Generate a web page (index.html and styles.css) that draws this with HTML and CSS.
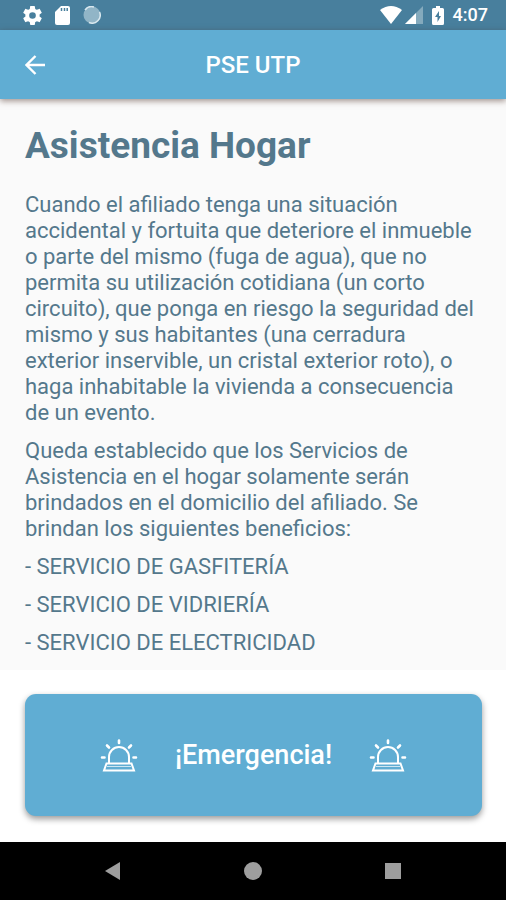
FILE: index.html
```html
<!DOCTYPE html>
<html lang="es">
<head>
<meta charset="utf-8">
<meta name="viewport" content="width=device-width, initial-scale=1">
<title>PSE UTP</title>
<link rel="stylesheet" href="styles.css">
</head>
<body>
<svg class="defs" aria-hidden="true">
  <symbol id="siren" viewBox="0 0 38 34">
    <g fill="none" stroke="#fff" stroke-width="2">
      <path d="M9 25V19a10 10 0 0 1 20 0v6"/>
      <path d="M6.500 25.500h25l2.500 7H4z"/>
      <path d="M7 28.500h24" stroke-width="1" opacity=".7"/>
      <path stroke-width="2.600" stroke-linecap="round" d="M19 2.500v2.500M7 7.500l2 2M31 7.500l-2 2M2 19.500h2.500M33.500 19.500h2.500"/>
    </g>
  </symbol>
</svg>
<div class="screen">
  <div class="status">
    <div class="status-group status-left">
      <svg class="icon-gear" viewBox="2 2 20 20"><path fill="#fff" d="M19.430 12.980c.04-.32.070-.64.070-.98s-.03-.66-.07-.98l2.110-1.650c.19-.15.240-.42.120-.64l-2-3.460c-.12-.22-.39-.3-.61-.22l-2.490 1c-.52-.4-1.080-.73-1.690-.98l-.38-2.650A.49.490 0 0 0 14 2h-4c-.25 0-.46.180-.49.420l-.38 2.650c-.61.250-1.170.590-1.690.980l-2.490-1c-.23-.09-.49 0-.61.220l-2 3.460c-.13.220-.07.490.120.640l2.110 1.650c-.04.320-.07.650-.07.980s.03.660.070.980l-2.110 1.650c-.19.150-.24.420-.12.640l2 3.460c.12.220.390.300.610.220l2.490-1c.52.400 1.080.730 1.690.980l.38 2.650c.03.240.240.420.490.420h4c.25 0 .46-.18.490-.42l.38-2.650c.61-.25 1.170-.59 1.690-.98l2.490 1c.23.090.490 0 .61-.22l2-3.460c.12-.22.070-.49-.12-.64l-2.110-1.650zM12 15.500a3.500 3.500 0 1 1 0-7 3.500 3.500 0 0 1 0 7z"/></svg>
      <svg class="icon-card" viewBox="0 0 15 19"><path fill="#fff" d="M6 0h7a2 2 0 0 1 2 2v15a2 2 0 0 1-2 2H2a2 2 0 0 1-2-2V6z"/><path stroke="#487f9d" stroke-width="1.500" d="M6.500 2v3M9.500 2v3M12.200 2v3"/></svg>
      <svg class="icon-sync" viewBox="0 0 18 18"><circle cx="9" cy="9" r="8.500" fill="#91b5c7"/><path fill="none" stroke="#d9e8ef" stroke-width="1.500" d="M2 4a8 8 0 0 1 9-3M16.500 6A8 8 0 0 1 6 16.500"/></svg>
    </div>
    <div class="status-group status-right">
      <svg class="icon-wifi" viewBox="0 0 22 18"><path fill="#fff" d="M0 4Q11-4 22 4L11 18z"/></svg>
      <svg class="icon-signal" viewBox="0 0 18 18"><path fill="#84aabd" d="M18 0v18H0z"/><path fill="#fff" d="M11 7v11H0z"/></svg>
      <svg class="icon-battery" viewBox="0 0 12 19"><path fill="#fff" d="M4 0h4v2h2.500A1.500 1.500 0 0 1 12 3.500v14a1.500 1.500 0 0 1-1.500 1.500h-9A1.500 1.500 0 0 1 0 17.500v-14A1.500 1.500 0 0 1 1.500 2H4z"/><path fill="#487f9d" d="M7 5L3 11h2.500v5L9 10H7z"/></svg>
      <span class="clock">4:07</span>
    </div>
  </div>
  <header class="appbar">
    <button class="back" aria-label="Volver"><svg viewBox="0 0 20 20"><path fill="none" stroke="#fff" stroke-width="2.400" d="M20 10H2M10.500 1L1.500 10l9 9"/></svg></button>
    <div class="title">PSE UTP</div>
  </header>
  <main class="content">
    <h1>Asistencia Hogar</h1>
    <p>Cuando el afiliado tenga una situación<br>accidental y fortuita que deteriore el inmueble<br>o parte del mismo (fuga de agua), que no<br>permita su utilización cotidiana (un corto<br>circuito), que ponga en riesgo la seguridad del<br>mismo y sus habitantes (una cerradura<br>exterior inservible, un cristal exterior roto), o<br>haga inhabitable la vivienda a consecuencia<br>de un evento.</p>
    <p>Queda establecido que los Servicios de<br>Asistencia en el hogar solamente serán<br>brindados en el domicilio del afiliado. Se<br>brindan los siguientes beneficios:</p>
    <p>- SERVICIO DE GASFITERÍA</p>
    <p>- SERVICIO DE VIDRIERÍA</p>
    <p>- SERVICIO DE ELECTRICIDAD</p>
  </main>
  <div class="action">
    <button class="emergency">
      <svg class="siren"><use href="#siren"/></svg>
      <span>¡Emergencia!</span>
      <svg class="siren"><use href="#siren"/></svg>
    </button>
  </div>
  <nav class="navbar">
    <button aria-label="Atrás"><svg viewBox="0 0 18 18"><path fill="#9e9e9e" d="M16 0v18L1 9z"/></svg></button>
    <button aria-label="Inicio"><svg viewBox="0 0 18 18"><circle cx="9" cy="9" r="9" fill="#9e9e9e"/></svg></button>
    <button aria-label="Recientes"><svg viewBox="0 0 18 18"><path fill="#9e9e9e" d="M1 1h16v16H1z"/></svg></button>
  </nav>
</div>
</body>
</html>
```
FILE: styles.css
```css
* { box-sizing: border-box; }
body { margin: 0; font-family: Roboto, sans-serif; color: #54788c; background: #fff; }
button { border: 0; padding: 0; background: none; color: inherit; font: inherit; }
svg { display: block; }
.defs { position: absolute; width: 0; height: 0; }
.screen { display: flex; flex-direction: column; min-height: 100vh; }
.status { display: flex; justify-content: space-between; height: 30px; padding: 0 18px 0 23px; background: #487f9d; color: #fff; }
.status-group { display: flex; align-items: center; }
.status-left { gap: 13px; }
.icon-gear { width: 19px; height: 19px; }
.icon-card { width: 15px; height: 19px; }
.icon-sync { width: 18px; height: 18px; }
.icon-wifi { width: 22px; height: 18px; }
.icon-signal { width: 18px; height: 18px; margin-left: 3px; }
.icon-battery { width: 12px; height: 19px; margin: 0 9px; }
.clock { font-size: 18px; font-weight: 500; line-height: 30px; }
.appbar { position: relative; z-index: 1; display: grid; grid-template-columns: 44px 1fr 44px; align-items: center; height: 69px; padding: 0 25px; background: #60add3; color: #fff; box-shadow: 0 2px 6px rgba(70, 40, 30, .5); }
.back svg { width: 20px; height: 20px; }
.title { text-align: center; font-size: 24px; font-weight: 500; }
.content { flex: 1; padding: 25px 24px 0 25px; background: #fafafa; }
h1 { margin: 0 0 24px; font-size: 37px; font-weight: 700; line-height: 44px; }
p { margin: 0 0 12px; font-size: 22px; line-height: 26px; }
p:last-child { margin-bottom: 0; }
.action { padding: 24px 24px 26px 25px; background: #fff; }
.emergency { display: flex; align-items: center; justify-content: center; gap: 37px; width: 100%; height: 122px; border-radius: 11px; background: #60add3; color: #fff; font-size: 27px; font-weight: 500; box-shadow: 0 3px 6px rgba(0, 0, 0, .4); }
.siren { width: 38px; height: 34px; }
.navbar { display: flex; align-items: center; justify-content: center; gap: 122px; height: 58px; background: #000; }
.navbar svg { width: 18px; height: 18px; }
```
